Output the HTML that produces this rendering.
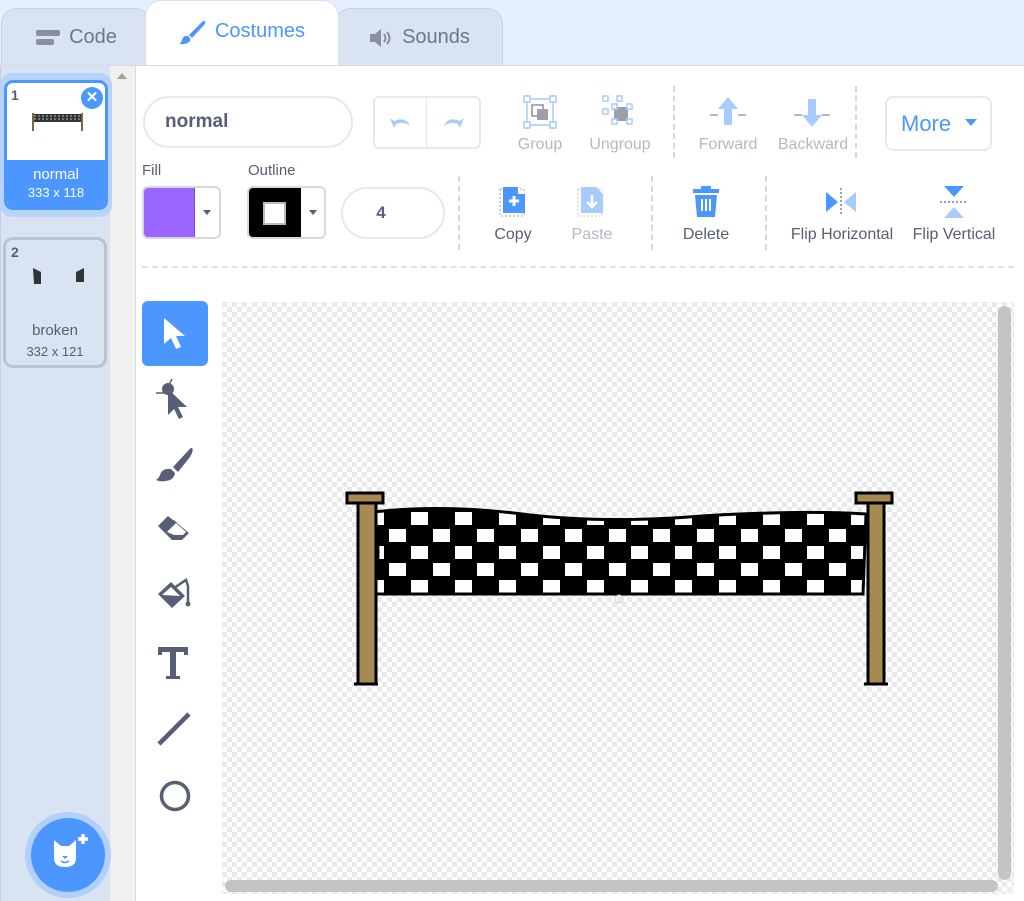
<!DOCTYPE html>
<html><head><meta charset="utf-8"><style>
*{box-sizing:border-box;margin:0;padding:0}
body{width:1024px;height:901px;overflow:hidden;background:#e5f0ff;font-family:"Liberation Sans",sans-serif;position:relative;color:#575e75}
.abs{position:absolute}
.tab{position:absolute;border:1px solid #c6d0e0;border-bottom:none;border-radius:16px 16px 0 0;background:#d9e3f2;color:#6d7590;font-size:20px;display:flex;align-items:center;justify-content:center;gap:8px}
.btxt{font-size:16px;color:#575e75;text-align:center;position:absolute}
.dis{color:#b3b8c4}
.vd{position:absolute;border-left:2px dashed #d5d8de;width:0}
</style></head><body>
<div class="tab" style="left:1px;top:8px;width:150px;height:58px"><svg width="26" height="20" viewBox="0 0 26 20"><rect x="1" y="2" width="24" height="6" rx="2" fill="#8a8fa0"/><rect x="1" y="11" width="18" height="6" rx="2" fill="#8a8fa0"/></svg>Code</div>
<div class="tab" style="left:335px;top:8px;width:168px;height:58px"><svg width="26" height="20" viewBox="0 0 26 20"><path d="M2 6h5l6-5v18l-6-5H2z" fill="#8a8fa0"/><path d="M16 6q3 4 0 8M19 4q5 6 0 12" stroke="#8a8fa0" stroke-width="2" fill="none"/></svg>Sounds</div>
<div class="tab" style="left:145px;top:0;width:194px;height:66px;background:#fff;color:#4c97ff;border-color:#d9dee8;border-bottom:none;padding-bottom:4px"><svg width="28" height="26" viewBox="0 0 28 26"><path d="M24 2 L10 16 L13 19 L26 5 Q27 1 24 2Z" fill="#4c97ff"/><path d="M9 17 Q4 16 3 21 Q2 24 0 25 Q8 26 11 22 Q12 19 9 17Z" fill="#4c97ff"/></svg>Costumes</div>
<div class="abs" style="left:0;top:65px;width:110px;height:836px;background:#d9e3f2;border-left:1px solid #ccd"></div>
<div class="abs" style="left:110px;top:65px;width:26px;height:836px;background:#f0f0f0;border-right:1px solid #d9d9d9"></div>
<div class="abs" style="left:117px;top:73px;width:0;height:0;border:5px solid transparent;border-bottom:6px solid #a0a0a0;border-top:none"></div>
<div class="abs" style="left:0;top:65px;width:1024px;height:1px;background:#d4dbe6"></div>
<div class="abs" style="left:136px;top:66px;width:888px;height:835px;background:#fff"></div>
<div class="abs" style="left:0;top:73px;width:112px;height:144px;border-radius:12px;background:#b8d3fb"></div>
<div class="abs" style="left:4px;top:80px;width:104px;height:130px;border:3px solid #4c97ff;border-radius:9px;background:#fff;overflow:hidden">
 <div class="abs" style="left:4px;top:4px;font-size:14px;font-weight:bold;color:#575e75">1</div>
 <div class="abs" style="left:74px;top:4px;width:22px;height:22px;border-radius:50%;background:#4c97ff;color:#fff;font-size:15px;font-weight:bold;text-align:center;line-height:22px">✕</div>
 <svg class="abs" style="left:24px;top:26px" width="54" height="24" viewBox="0 0 54 24"><rect x="1" y="4" width="2" height="18" fill="#7a6a4a"/><rect x="50" y="4" width="2" height="18" fill="#7a6a4a"/><rect x="3" y="5" width="47" height="8" fill="#333"/><path d="M3 7h47M3 10h47" stroke="#bbb" stroke-dasharray="2 2"/></svg>
 <div class="abs" style="left:0;top:77px;width:98px;height:50px;background:#4c97ff;color:#fff;text-align:center">
  <div style="font-size:15px;margin-top:6px">normal</div><div style="font-size:13px;margin-top:2px">333 x 118</div></div>
</div>
<div class="abs" style="left:3px;top:237px;width:104px;height:131px;border:3px solid #b9c3d3;border-radius:10px;background:#d9e3f2">
 <div class="abs" style="left:5px;top:4px;font-size:14px;font-weight:bold">2</div>
 <svg class="abs" style="left:24px;top:26px" width="60" height="22"><path d="M3 2l8 4v12H4z" fill="#333"/><path d="M46 6l8-4v14h-8z" fill="#333"/></svg>
 <div class="abs" style="left:0;top:82px;width:98px;text-align:center;font-size:15px">broken</div>
 <div class="abs" style="left:0;top:104px;width:98px;text-align:center;font-size:13px">332 x 121</div>
</div>
<div class="abs" style="left:25px;top:812px;width:86px;height:86px;border-radius:50%;background:#b3cffb"></div>
<div class="abs" style="left:31px;top:818px;width:74px;height:74px;border-radius:50%;background:#4c97ff"></div>
<svg class="abs" style="left:50px;top:832px" width="44" height="40" viewBox="0 0 44 40"><path d="M4 8l7 6h8l7-6v18q0 9-11 9T4 26z" fill="#fff"/><path d="M12 24h6l-3 3z" fill="#4c97ff"/><path d="M11 29q4 3 8 0" stroke="#4c97ff" stroke-width="1.5" fill="none"/><path d="M33 2v10M28 7h10" stroke="#fff" stroke-width="3.5"/></svg>
<div class="abs" style="left:143px;top:96px;width:210px;height:52px;border:2px solid #e5e8ee;border-radius:26px;font-size:19px;font-weight:bold;padding-left:20px;line-height:48px">normal</div>
<div class="abs" style="left:373px;top:96px;width:108px;height:53px;border:2px solid #e5e8ee;border-radius:6px"></div>
<div class="abs" style="left:426px;top:97px;width:1px;height:51px;background:#e5e8ee"></div>
<svg class="abs" style="left:386px;top:112px" width="30" height="20"><path d="M4 6l4 10 2-4q8-3 14 2-4-10-16-5z" fill="#a9cbfb"/></svg>
<svg class="abs" style="left:438px;top:112px" width="30" height="20"><path d="M26 6l-4 10-2-4q-8-3-14 2 4-10 16-5z" fill="#a9cbfb"/></svg>
<svg class="abs" style="left:522px;top:95px" width="36" height="34" viewBox="0 0 36 34"><rect x="5" y="4" width="26" height="26" fill="none" stroke="#a9cbfb" stroke-width="1.5"/><rect x="10" y="10" width="11" height="11" fill="none" stroke="#8a8fa0" stroke-width="1.5"/><rect x="15" y="14" width="11" height="11" fill="#9aa0ad"/><g fill="#fff" stroke="#a9cbfb" stroke-width="1.5"><rect x="2" y="1" width="6" height="6"/><rect x="28" y="1" width="6" height="6"/><rect x="2" y="27" width="6" height="6"/><rect x="28" y="27" width="6" height="6"/></g></svg>
<svg class="abs" style="left:600px;top:95px" width="36" height="34" viewBox="0 0 36 34"><rect x="14" y="12" width="14" height="14" fill="#9aa0ad"/><g fill="#fff" stroke="#a9cbfb" stroke-width="1.5"><rect x="3" y="1" width="5" height="5"/><rect x="17" y="1" width="5" height="5"/><rect x="3" y="14" width="5" height="5"/><rect x="12" y="9" width="5" height="5"/><rect x="27" y="9" width="5" height="5"/><rect x="12" y="24" width="5" height="5"/><rect x="27" y="24" width="5" height="5"/></g></svg>
<div class="btxt dis" style="left:510px;top:136px;width:60px">Group</div>
<div class="btxt dis" style="left:585px;top:136px;width:70px">Ungroup</div>
<div class="vd" style="left:673px;top:86px;height:72px"></div>
<svg class="abs" style="left:708px;top:95px" width="40" height="34"><path d="M20 2l10 12h-6v16h-8V14h-6z" fill="#a9cbfb"/><path d="M2 20h8M30 20h8" stroke="#b3b8c4" stroke-width="2"/></svg>
<svg class="abs" style="left:792px;top:95px" width="40" height="34"><path d="M20 32l10-12h-6V4h-8v16h-6z" fill="#a9cbfb"/><path d="M2 20h8M30 20h8" stroke="#b3b8c4" stroke-width="2"/></svg>
<div class="btxt dis" style="left:692px;top:136px;width:72px">Forward</div>
<div class="btxt dis" style="left:772px;top:136px;width:82px">Backward</div>
<div class="vd" style="left:855px;top:86px;height:72px"></div>
<div class="abs" style="left:885px;top:96px;width:107px;height:55px;border:2px solid #e5e8ee;border-radius:8px;color:#4c97ff;font-size:22px;line-height:51px;padding-left:14px">More<span style="position:absolute;left:78px;top:21px;border:6px solid transparent;border-top:7px solid #4c97ff;border-bottom:none"></span></div>
<div class="abs" style="left:142px;top:162px;font-size:15px">Fill</div>
<div class="abs" style="left:248px;top:162px;font-size:15px">Outline</div>
<div class="abs" style="left:142px;top:186px;width:79px;height:53px;border:2px solid #d5d8de;border-radius:6px;overflow:hidden;background:#fff"><div style="width:51px;height:100%;background:#9966ff;border-right:1px solid #774dcb"></div><span class="abs" style="left:59px;top:22px;border:4px solid transparent;border-top:5px solid #575e75;border-bottom:none"></span></div>
<div class="abs" style="left:247px;top:186px;width:79px;height:53px;border:2px solid #d5d8de;border-radius:6px;overflow:hidden;background:#fff"><div style="width:52px;height:100%;background:#000;position:relative"><div class="abs" style="left:14px;top:14px;width:23px;height:23px;background:#fff;border:2px solid #bbb"></div></div><span class="abs" style="left:60px;top:22px;border:4px solid transparent;border-top:5px solid #575e75;border-bottom:none"></span></div>
<div class="abs" style="left:341px;top:187px;width:104px;height:52px;border:2px solid #e5e8ee;border-radius:26px;font-size:17px;font-weight:bold;text-align:center;line-height:48px;padding-right:24px">4</div>
<div class="vd" style="left:458px;top:176px;height:74px"></div>
<svg class="abs" style="left:498px;top:185px" width="32" height="34"><rect x="2" y="4" width="24" height="27" fill="none" stroke="#a0a5b2" stroke-dasharray="2 2"/><path d="M5 2h15l7 7v19H5z" fill="#4c97ff"/><path d="M20 2v7h7" fill="#fff"/><path d="M16 11v10M11 16h10" stroke="#fff" stroke-width="3"/></svg>
<div class="btxt" style="left:483px;top:226px;width:60px">Copy</div>
<svg class="abs" style="left:576px;top:185px" width="32" height="34"><rect x="2" y="4" width="24" height="27" fill="none" stroke="#c0c4cc" stroke-dasharray="2 2"/><path d="M5 2h15l7 7v19H5z" fill="#a9cbfb"/><path d="M16 10v12M11 17l5 5 5-5" stroke="#fff" stroke-width="2.5" fill="none"/></svg>
<div class="btxt dis" style="left:562px;top:226px;width:60px">Paste</div>
<div class="vd" style="left:651px;top:176px;height:74px"></div>
<svg class="abs" style="left:690px;top:184px" width="32" height="36"><path d="M11 5V2h10v3h8v4H3V5z" fill="#4c97ff"/><path d="M5 11h22l-2 22H7z" fill="#4c97ff"/><path d="M12 15v12M16 15v12M20 15v12" stroke="#fff" stroke-width="2"/></svg>
<div class="btxt" style="left:672px;top:226px;width:68px">Delete</div>
<div class="vd" style="left:765px;top:176px;height:74px"></div>
<svg class="abs" style="left:824px;top:186px" width="36" height="32"><path d="M2 6l12 10-12 10z" fill="#4c97ff"/><path d="M32 6L20 16l12 10z" fill="#a9cbfb"/><path d="M17 2v28" stroke="#9aa0ad" stroke-width="2" stroke-dasharray="2 2"/></svg>
<div class="btxt" style="left:780px;top:226px;width:124px">Flip Horizontal</div>
<svg class="abs" style="left:938px;top:184px" width="32" height="36"><path d="M6 2h20L16 13z" fill="#4c97ff"/><path d="M6 34h20L16 23z" fill="#a9cbfb"/><path d="M2 18h28" stroke="#9aa0ad" stroke-width="2" stroke-dasharray="2 2"/></svg>
<div class="btxt" style="left:904px;top:226px;width:100px">Flip Vertical</div>
<div class="abs" style="left:142px;top:266px;width:872px;border-top:2px dashed #dfe1e5"></div>
<div class="abs" style="left:142px;top:301px;width:66px;height:65px;background:#4c97ff;border-radius:6px"></div>
<svg class="abs" style="left:158px;top:316px" width="34" height="36"><path d="M6 2v26l7-6 5 11 5-2-5-11h9z" fill="#fff"/></svg>
<svg class="abs" style="left:152px;top:377px" width="44" height="46"><circle cx="16" cy="12" r="6" fill="#575e75"/><path d="M4 16h8M20 2l-3 6" stroke="#575e75" stroke-width="1.5"/><path d="M16 12v26l6-6 5 10 4-2-5-10h9z" fill="#575e75"/></svg>
<svg class="abs" style="left:154px;top:446px" width="42" height="40"><path d="M38 2q2 2-2 9L24 26l-5-5L33 6q4-5 5-4z" fill="#575e75"/><path d="M17 23l4 4q-1 7-9 8-6 1-10-1 3-2 4-5 2-7 11-6z" fill="#575e75"/></svg>
<svg class="abs" style="left:154px;top:510px" width="42" height="40"><path d="M14 6l-10 10 14 14h10l7-7z" fill="#575e75"/><path d="M10 20l10-10 14 13-5 5h-8z" fill="#575e75"/><path d="M13 22l9-9 10 9-3 3h-9z" fill="#fff"/></svg>
<svg class="abs" style="left:154px;top:576px" width="42" height="40"><path d="M4 18l13-12 14 14-13 12z" fill="#575e75"/><path d="M8 19l9-8 9 9z" fill="#fff"/><path d="M20 12l12-8 2 6v16" stroke="#575e75" stroke-width="2.5" fill="none"/><circle cx="34" cy="28" r="2.5" fill="#575e75"/></svg>
<svg class="abs" style="left:156px;top:645px" width="36" height="36"><path d="M2 2h30v8h-4V7H20v24h4v3H10v-3h4V7H6v3H2z" fill="#575e75"/></svg>
<svg class="abs" style="left:155px;top:710px" width="40" height="40"><path d="M4 34L34 4" stroke="#575e75" stroke-width="4.5"/></svg>
<svg class="abs" style="left:156px;top:777px" width="38" height="38"><circle cx="19" cy="19" r="13.5" fill="none" stroke="#575e75" stroke-width="3.5"/></svg>
<svg class="abs" style="left:222px;top:302px" width="792" height="592" viewBox="0 0 792 592">
<defs>
<pattern id="ck" width="10" height="10" patternUnits="userSpaceOnUse"><rect width="10" height="10" fill="#fff"/><rect width="5" height="5" fill="#e9e9e9"/><rect x="5" y="5" width="5" height="5" fill="#e9e9e9"/></pattern>
<pattern id="fl" width="44" height="34" patternUnits="userSpaceOnUse" x="10" y="208"><rect width="44" height="34" fill="#000"/><rect x="3" y="2" width="17" height="13" fill="#fff"/><rect x="25" y="19" width="17" height="13" fill="#fff"/></pattern>
<clipPath id="fc"><path d="M152 210 Q220 202 300 212 T480 214 Q580 208 644 212 L641 292 L152 292 Q160 250 152 210z"/></clipPath>
</defs>
<rect x="0" y="0" width="792" height="592" rx="4" fill="url(#ck)" stroke="#e8e8e8"/>
<rect x="150" y="205" width="500" height="95" fill="url(#fl)" clip-path="url(#fc)"/>
<path d="M152 210 Q220 202 300 212 T480 214 Q580 208 644 212 L641 292 L152 292 Q160 250 152 210z" fill="none" stroke="#000" stroke-width="3"/>
<rect x="136" y="200" width="18" height="182" fill="#a68a52" stroke="#000" stroke-width="3"/>
<rect x="125" y="191" width="36" height="10" fill="#a68a52" stroke="#000" stroke-width="3"/>
<path d="M132 382h24" stroke="#000" stroke-width="3"/>
<rect x="646" y="200" width="16" height="182" fill="#a68a52" stroke="#000" stroke-width="3"/>
<rect x="634" y="191" width="36" height="10" fill="#a68a52" stroke="#000" stroke-width="3"/>
<path d="M642 382h24" stroke="#000" stroke-width="3"/>
<circle cx="397" cy="297" r="4" fill="none" stroke="#ccc"/>
<rect x="776" y="4" width="13" height="574" rx="6.5" fill="#c4c4c4"/>
<rect x="3" y="578" width="773" height="12" rx="6" fill="#c4c4c4"/>
</svg>
</body></html>
